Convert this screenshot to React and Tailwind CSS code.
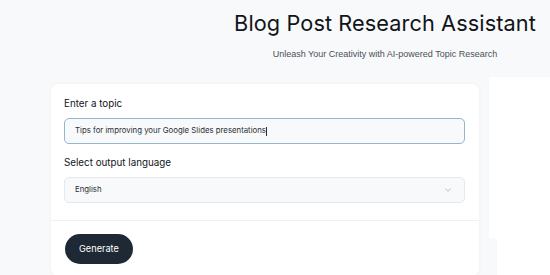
import { ChevronDown } from 'lucide-react';

export default function App() {
  return (
    <div className="w-[550px] h-[275px] overflow-hidden bg-[#f8f9fb] font-['Inter',sans-serif]">
      <div className="w-[770px] text-center pt-[9px]">
        <h1 className="text-[21.7px] leading-[28px] text-[#111418] font-normal tracking-[0.1px]">
          Blog Post Research Assistant
        </h1>
        <p className="mt-[11px] text-[9px] leading-[12px] text-[#4b5058] font-['Liberation_Sans',sans-serif]">
          Unleash Your Creativity with AI-powered Topic Research
        </p>
      </div>

      <div className="flex items-start mt-[17px]">
        <div className="ml-[51px] w-[428px] bg-white rounded-[8px] shadow-[0_0_4px_rgba(0,0,0,0.04)] mt-[7px]">
          <div className="px-[13px] pt-[14px] pb-[17px]">
            <label className="block text-[9.8px] leading-[12px] text-[#111418]">Enter a topic</label>
            <div className="mt-[8px] h-[26px] w-[401px] rounded-[5px] border border-[#93b6c9] bg-[#f8f9fb] flex items-center px-[10px]">
              <span className="text-[7.8px] text-[#2a2f36]">
                Tips for improving your Google Slides presentations
              </span>
              <span className="w-px h-[9px] bg-[#2a2f36]" />
            </div>
            <label className="block mt-[13px] text-[9.8px] leading-[12px] text-[#111418]">Select output language</label>
            <div className="mt-[8px] h-[26px] w-[401px] rounded-[5px] border border-[#e6e8eb] bg-[#f8f9fb] flex items-center justify-between pl-[10px] pr-[11px]">
              <span className="text-[7.8px] text-[#2a2f36]">English</span>
              <ChevronDown size={10} className="text-[#969ca4]" strokeWidth={1.5} />
            </div>
          </div>
          <div className="border-t border-[#eef0f2] px-[14px] pt-[13px] pb-[12px]">
            <button className="h-[30px] px-[14px] rounded-full bg-[#1e2935] text-white text-[9.2px]">
              Generate
            </button>
          </div>
        </div>

        <div className="ml-[10px] flex-1 flex flex-col">
          <div className="h-[161px] bg-white" />
          <div className="ml-[8px] h-[60px] bg-white" />
        </div>
      </div>
    </div>
  );
}
